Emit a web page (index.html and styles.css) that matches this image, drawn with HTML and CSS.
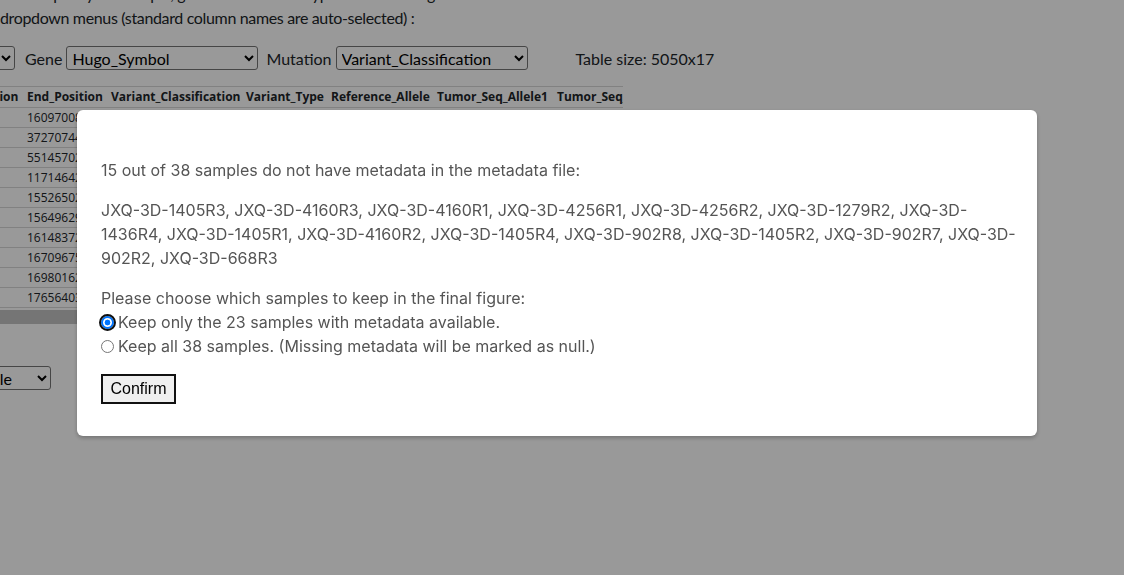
FILE: index.html
```html
<!DOCTYPE html>
<html lang="en">
<head>
<meta charset="utf-8">
<title>Metadata check</title>
<link rel="stylesheet" href="styles.css">
</head>
<body>
<div class="page">
  <p class="intro">Please specify the sample, gene and mutation type columns using the<br>dropdown menus (standard column names are auto-selected) :</p>
  <div class="controls">
    <select class="sel sel-first"><option>Tumor_Sample_Barcode</option></select>
    <label class="lbl">Gene</label>
    <select class="sel"><option>Hugo_Symbol</option></select>
    <label class="lbl">Mutation</label>
    <select class="sel"><option>Variant_Classification</option></select>
    <span class="tsize">Table size: 5050x17</span>
  </div>
  <div class="table-wrap">
    <table class="data">
      <colgroup>
        <col class="c-start"><col class="c-end"><col class="c-vc"><col class="c-vt"><col class="c-ref"><col class="c-t1"><col class="c-t2">
      </colgroup>
      <thead>
        <tr><th>Start_Position</th><th>End_Position</th><th>Variant_Classification</th><th>Variant_Type</th><th>Reference_Allele</th><th>Tumor_Seq_Allele1</th><th>Tumor_Seq_Allele2</th></tr>
      </thead>
      <tbody>
        <tr><td>160970087</td><td>160970087</td><td>Missense_Mutation</td><td>SNP</td><td>C</td><td>C</td><td>T</td></tr>
        <tr><td>37270744</td><td>37270744</td><td>Silent</td><td>SNP</td><td>G</td><td>G</td><td>A</td></tr>
        <tr><td>55145702</td><td>55145702</td><td>Missense_Mutation</td><td>SNP</td><td>C</td><td>C</td><td>A</td></tr>
        <tr><td>117146423</td><td>117146423</td><td>Nonsense_Mutation</td><td>SNP</td><td>G</td><td>G</td><td>T</td></tr>
        <tr><td>155265024</td><td>155265024</td><td>Missense_Mutation</td><td>SNP</td><td>A</td><td>A</td><td>G</td></tr>
        <tr><td>156496295</td><td>156496295</td><td>Silent</td><td>SNP</td><td>C</td><td>C</td><td>T</td></tr>
        <tr><td>161483721</td><td>161483721</td><td>Missense_Mutation</td><td>SNP</td><td>T</td><td>T</td><td>C</td></tr>
        <tr><td>167096751</td><td>167096751</td><td>Splice_Site</td><td>SNP</td><td>G</td><td>G</td><td>A</td></tr>
        <tr><td>169801623</td><td>169801623</td><td>Missense_Mutation</td><td>SNP</td><td>C</td><td>C</td><td>G</td></tr>
        <tr><td>176564031</td><td>176564031</td><td>Frame_Shift_Del</td><td>DEL</td><td>A</td><td>A</td><td>-</td></tr>
      </tbody>
    </table>
  </div>
  <div class="hscroll"><div class="thumb"></div></div>
  <select class="sel sel-bottom"><option>Sample</option></select>
</div>

<div class="overlay">
  <div class="modal">
    <div class="modal-head"></div>
    <p class="msg">15 out of 38 samples do not have metadata in the metadata file:</p>
    <p class="msg">JXQ-3D-1405R3, JXQ-3D-4160R3, JXQ-3D-4160R1, JXQ-3D-4256R1, JXQ-3D-4256R2, JXQ-3D-1279R2, JXQ-3D-1436R4, JXQ-3D-1405R1, JXQ-3D-4160R2, JXQ-3D-1405R4, JXQ-3D-902R8, JXQ-3D-1405R2, JXQ-3D-902R7, JXQ-3D-902R2, JXQ-3D-668R3</p>
    <p class="msg msg-last">Please choose which samples to keep in the final figure:</p>
    <label class="opt"><input type="radio" name="keep" class="radio radio-focus" checked>Keep only the 23 samples with metadata available.</label>
    <label class="opt"><input type="radio" name="keep" class="radio">Keep all 38 samples. (Missing metadata will be marked as null.)</label>
    <button class="confirm" type="button">Confirm</button>
  </div>
</div>
</body>
</html>
```

FILE: styles.css
```css
html, body {
  margin: 0;
  padding: 0;
}
body {
  width: 1124px;
  height: 575px;
  overflow: hidden;
  background: #fff;
  color: #212529;
  font-family: Lato, "Open Sans", sans-serif;
  font-size: 16px;
}
.intro {
  margin: -18px 0 0 0;
  line-height: 24px;
  letter-spacing: -0.35px;
  white-space: nowrap;
}
.controls {
  display: flex;
  align-items: center;
  margin-top: 16px;
  height: 24px;
  white-space: nowrap;
}
.sel {
  width: 192px;
  height: 24px;
  font-family: Lato, "Open Sans", sans-serif;
  font-size: 16px;
  color: #000;
  background: #fff;
  border: 1px solid #767676;
  border-radius: 3px;
  padding: 0 0 0 1px;
  margin: 0;
}
.sel-first {
  margin-left: -177px;
}
.lbl {
  margin: 0 4px 0 10px;
}
.lbl + .sel + .lbl {
  margin-left: 8px;
}
.tsize {
  margin-left: 48px;
}
.table-wrap {
  margin-top: 16px;
  width: 623px;
  overflow: hidden;
}
.data {
  margin-left: -69px;
  border-collapse: collapse;
  table-layout: fixed;
  width: 762px;
  font-family: "Open Sans", sans-serif;
  font-size: 12px;
  line-height: 16px;
}
.c-start { width: 92px; }
.c-end { width: 84px; }
.c-vc { width: 135px; }
.c-vt { width: 85px; }
.c-ref { width: 106px; }
.c-t1 { width: 120px; }
.c-t2 { width: 140px; }
.data th {
  text-align: left;
  font-weight: 700;
  padding: 2px 4px 2px 4px;
  border-top: 1px solid #d8d8d8;
  border-bottom: 1px solid #d8d8d8;
  white-space: nowrap;
  overflow: hidden;
}
.data td {
  padding: 2px 4px 1px 4px;
  border-bottom: 1px solid #d8d8d8;
  white-space: nowrap;
  overflow: hidden;
}
.hscroll {
  margin-top: 2px;
  width: 623px;
  height: 14px;
  background: #f1f1f1;
}
.thumb {
  width: 420px;
  height: 14px;
  background: #c4c4c4;
}
.sel-bottom {
  display: block;
  width: 96px;
  margin: 42px 0 0 -45px;
}

.overlay {
  position: fixed;
  inset: 0;
  background: rgba(0, 0, 0, 0.4);
}
.modal {
  box-sizing: border-box;
  width: 960px;
  margin: 110px 0 0 77px;
  padding: 24px 20px 32px 24px;
  background: #fff;
  border-radius: 6px;
  box-shadow: 0 2px 4px rgba(0, 0, 0, 0.25);
  font-family: Inter, "Noto Sans", sans-serif;
  font-size: 16px;
  line-height: 24px;
  color: #555;
}
.modal-head {
  height: 24px;
}
.msg {
  margin: 0 0 16px 0;
}
.msg-last {
  margin-bottom: 0;
}
.opt {
  display: flex;
  align-items: center;
  height: 24px;
}
.radio {
  appearance: none;
  -webkit-appearance: none;
  box-sizing: border-box;
  width: 13px;
  height: 13px;
  margin: 0 4px 0 0;
  border: 1px solid #767676;
  border-radius: 50%;
  background: #fff;
}
.radio:checked {
  border: 2px solid #0075ff;
  background: radial-gradient(circle, #0075ff 0 2.6px, #fff 3.2px);
}
.radio-focus {
  outline: 2px solid #101010;
  outline-offset: 0;
}
.confirm {
  display: block;
  box-sizing: border-box;
  margin-top: 16px;
  padding: 3px 7px;
  height: 30px;
  width: 75px;
  font-family: "Liberation Sans", Arial, sans-serif;
  font-size: 16px;
  color: #000;
  background: #efefef;
  border: 2px solid #111;
  border-radius: 0;
}
```
